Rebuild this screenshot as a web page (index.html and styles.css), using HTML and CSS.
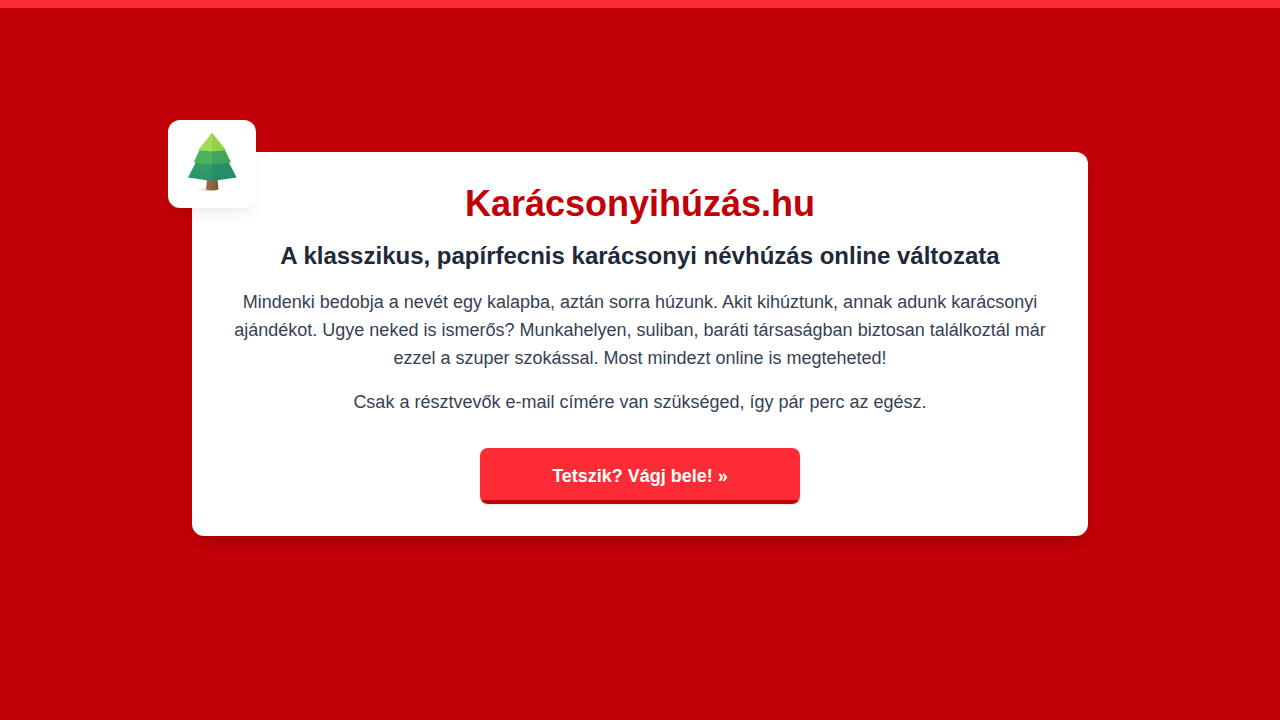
FILE: index.html
```
<!DOCTYPE html>
<html lang="hu">
<head>
    <meta charset="utf-8">
    <meta name="viewport" content="width=device-width, initial-scale=1">
    <title>Karácsonyihúzás.hu</title>
    <link rel="stylesheet" href="styles.css">
</head>
<body>
    <main class="card">
        <div class="logo">
            <svg viewBox="0 0 64 64" role="img" aria-label="Karácsonyfa">
                <defs>
                    <linearGradient id="shade" x1="0" x2="1">
                        <stop offset="0" stop-color="#000" stop-opacity="0"/>
                        <stop offset="1" stop-color="#000" stop-opacity=".22"/>
                    </linearGradient>
                    <linearGradient id="trunk" x1="0" x2="1">
                        <stop offset="0" stop-color="#9a7048"/>
                        <stop offset="1" stop-color="#7b5432"/>
                    </linearGradient>
                    <linearGradient id="left" x1="0" x2="0" y1="0" y2="1">
                        <stop offset="0" stop-color="#35a067"/>
                        <stop offset="1" stop-color="#27946a"/>
                    </linearGradient>
                    <linearGradient id="right" x1="0" x2="0" y1="0" y2="1">
                        <stop offset="0" stop-color="#2b9166"/>
                        <stop offset="1" stop-color="#218b6a"/>
                    </linearGradient>
                </defs>
                <ellipse cx="24" cy="57.500" rx="9" ry="1.300" fill="url(#shade)"/>
                <path d="M27 47h10.500l1 10.500q-6.200 2-12.500 0z" fill="url(#trunk)"/>
                <path d="M32 28H17L8 45.500l24 3.500z" fill="url(#left)"/>
                <path d="M32 28H47.500L56.700 45.500 32 49z" fill="url(#right)"/>
                <path d="M32 16H20.500L13.700 30.500 32 32.500z" fill="#4db15c"/>
                <path d="M32 16H44L51 30.500 32 32.500z" fill="#41a55f"/>
                <path d="M32 .700L18 18.300 32 19.500z" fill="#a2db54"/>
                <path d="M32 .700L46.300 18.300 32 19.500z" fill="#93d14c"/>
            </svg>
        </div>
        <h1>Karácsonyihúzás.hu</h1>
        <h2>A klasszikus, papírfecnis karácsonyi névhúzás online változata</h2>
        <p>Mindenki bedobja a nevét egy kalapba, aztán sorra húzunk. Akit kihúztunk, annak adunk karácsonyi ajándékot. Ugye neked is ismerős? Munkahelyen, suliban, baráti társaságban biztosan találkoztál már ezzel a szuper szokással. Most mindezt online is megteheted!</p>
        <p>Csak a résztvevők e-mail címére van szükséged, így pár perc az egész.</p>
        <a class="btn" href="#">Tetszik? Vágj bele! »</a>
    </main>
</body>
</html>
```
FILE: styles.css
```
* {
    box-sizing: border-box;
}
body {
    margin: 0;
    min-height: 100vh;
    padding: 144px 32px;
    border-top: 8px solid #fb2c36;
    background-color: #c10007;
    color: #364153;
    font-family: "Liberation Sans", Arial, Helvetica, sans-serif;
    font-size: 18px;
    line-height: 28px;
}
.card {
    position: relative;
    max-width: 896px;
    margin: 0 auto;
    padding: 32px;
    border-radius: 12px;
    background-color: #fff;
    text-align: center;
    box-shadow: 0 10px 15px -3px rgba(0, 0, 0, 0.1), 0 4px 6px -4px rgba(0, 0, 0, 0.1);
}
/* Tree badge hanging over the top left corner of the card */
.logo {
    position: absolute;
    top: -32px;
    left: -24px;
    padding: 12px;
    border-radius: 12px;
    background-color: #fff;
    box-shadow: 0 10px 15px -3px rgba(0, 0, 0, 0.05), 0 4px 6px -4px rgba(0, 0, 0, 0.05);
}
.logo svg {
    display: block;
    width: 64px;
    height: 64px;
}
h1 {
    margin: 0 0 16px;
    color: #c10007;
    font-size: 36px;
    line-height: 40px;
}
h2 {
    margin: 0 0 16px;
    color: #1e2939;
    font-size: 24px;
    line-height: 32px;
}
p {
    margin: 0 0 16px;
}
.btn {
    display: block;
    max-width: 320px;
    margin: 32px auto 0;
    padding: 14px 16px;
    border-radius: 8px;
    background: linear-gradient(to top, #c10007 4px, #fb2c36 4px);
    color: #fff;
    font-weight: bold;
    text-decoration: none;
    box-shadow: 0 1px 3px rgba(0, 0, 0, 0.1), 0 1px 2px -1px rgba(0, 0, 0, 0.1);
}
.btn:hover {
    background: linear-gradient(to top, #c10007 4px, #e7000b 4px);
}
```
